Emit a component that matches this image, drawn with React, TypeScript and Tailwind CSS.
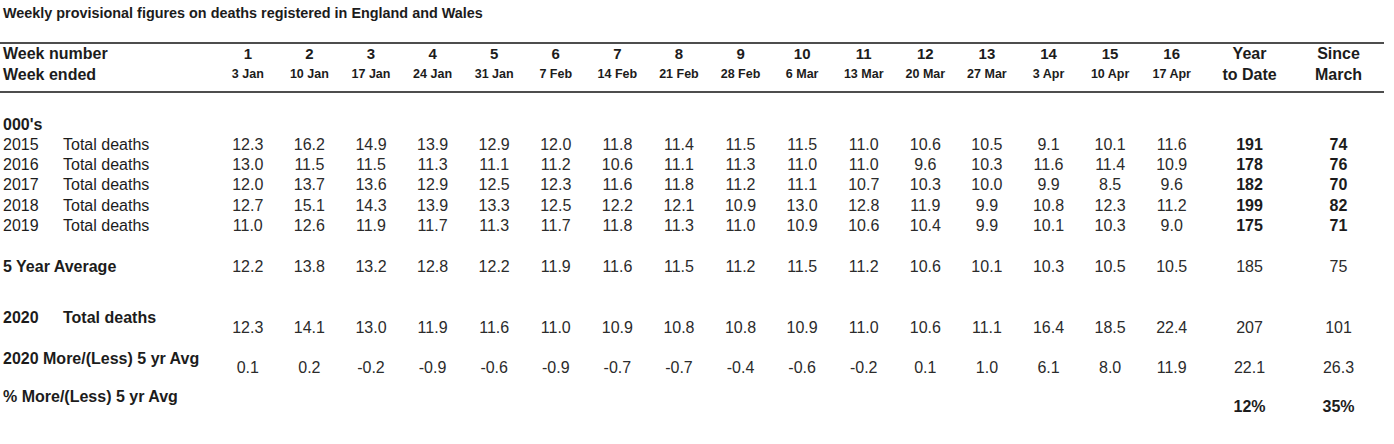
const cols = 'grid grid-cols-[217px_repeat(16,61.6px)_94px_84px]'

const weeks = [
  ['1', '3 Jan'],
  ['2', '10 Jan'],
  ['3', '17 Jan'],
  ['4', '24 Jan'],
  ['5', '31 Jan'],
  ['6', '7 Feb'],
  ['7', '14 Feb'],
  ['8', '21 Feb'],
  ['9', '28 Feb'],
  ['10', '6 Mar'],
  ['11', '13 Mar'],
  ['12', '20 Mar'],
  ['13', '27 Mar'],
  ['14', '3 Apr'],
  ['15', '10 Apr'],
  ['16', '17 Apr'],
]

const years = [
  {
    year: '2015',
    values: ['12.3', '16.2', '14.9', '13.9', '12.9', '12.0', '11.8', '11.4', '11.5', '11.5', '11.0', '10.6', '10.5', '9.1', '10.1', '11.6'],
    ytd: '191',
    since: '74',
  },
  {
    year: '2016',
    values: ['13.0', '11.5', '11.5', '11.3', '11.1', '11.2', '10.6', '11.1', '11.3', '11.0', '11.0', '9.6', '10.3', '11.6', '11.4', '10.9'],
    ytd: '178',
    since: '76',
  },
  {
    year: '2017',
    values: ['12.0', '13.7', '13.6', '12.9', '12.5', '12.3', '11.6', '11.8', '11.2', '11.1', '10.7', '10.3', '10.0', '9.9', '8.5', '9.6'],
    ytd: '182',
    since: '70',
  },
  {
    year: '2018',
    values: ['12.7', '15.1', '14.3', '13.9', '13.3', '12.5', '12.2', '12.1', '10.9', '13.0', '12.8', '11.9', '9.9', '10.8', '12.3', '11.2'],
    ytd: '199',
    since: '82',
  },
  {
    year: '2019',
    values: ['11.0', '12.6', '11.9', '11.7', '11.3', '11.7', '11.8', '11.3', '11.0', '10.9', '10.6', '10.4', '9.9', '10.1', '10.3', '9.0'],
    ytd: '175',
    since: '71',
  },
]

const average = ['12.2', '13.8', '13.2', '12.8', '12.2', '11.9', '11.6', '11.5', '11.2', '11.5', '11.2', '10.6', '10.1', '10.3', '10.5', '10.5']
const current = ['12.3', '14.1', '13.0', '11.9', '11.6', '11.0', '10.9', '10.8', '10.8', '10.9', '11.0', '10.6', '11.1', '16.4', '18.5', '22.4']
const diff = ['0.1', '0.2', '-0.2', '-0.9', '-0.6', '-0.9', '-0.7', '-0.7', '-0.4', '-0.6', '-0.2', '0.1', '1.0', '6.1', '8.0', '11.9']

function Cells({ values, className }: { values: string[]; className: string }) {
  return (
    <>
      {values.map((v, i) => (
        <span key={i} className={`text-center ${className}`}>
          {v}
        </span>
      ))}
    </>
  )
}

export default function App() {
  return (
    <div className="h-[444px] w-[1394px] bg-white font-['Liberation_Sans',Arial,sans-serif] text-[#1c1c1c]">
      <h1 className="pl-[3px] pt-[5px] text-[14.4px] font-bold leading-[16px]">
        Weekly provisional figures on deaths registered in England and Wales
      </h1>

      <div className="mt-[21px] w-[1384px]">
        <div className="h-[2px] bg-[#4d4d4d]" />

        <div className={`${cols} items-center`}>
          <span className="pl-[3px] text-[16px] font-bold leading-[19px]">Week number</span>
          {weeks.map(([n]) => (
            <span key={n} className="text-center text-[15px] font-bold leading-[19px]">
              {n}
            </span>
          ))}
          <span className="text-center text-[16px] font-bold leading-[19px]">Year</span>
          <span className="text-center text-[16px] font-bold leading-[19px]">Since</span>
        </div>
        <div className={`${cols} mb-[6px] items-center`}>
          <span className="pl-[3px] text-[16px] font-bold leading-[21px]">Week ended</span>
          {weeks.map(([n, d]) => (
            <span key={n} className="pt-[1px] text-center text-[12.5px] font-bold leading-[21px]">
              {d}
            </span>
          ))}
          <span className="text-center text-[16px] font-bold leading-[21px]">to Date</span>
          <span className="text-center text-[16px] font-bold leading-[21px]">March</span>
        </div>

        <div className="h-[2px] bg-[#4d4d4d]" />

        <p className="mt-[22px] pl-[3px] text-[16px] font-bold leading-[20px]">000's</p>

        {years.map((row) => (
          <div key={row.year} className={`${cols} text-[16px] leading-[20.2px]`}>
            <span className="flex pl-[3px]">
              <span className="w-[60px]">{row.year}</span>
              <span>Total deaths</span>
            </span>
            <Cells values={row.values} className="text-[#2b2b2b]" />
            <span className="text-center font-bold">{row.ytd}</span>
            <span className="text-center font-bold">{row.since}</span>
          </div>
        ))}

        <div className={`${cols} mt-[21px] text-[16px] leading-[20px]`}>
          <span className="pl-[3px] font-bold">5 Year Average</span>
          <Cells values={average} className="text-[#2b2b2b]" />
          <span className="text-center text-[#2b2b2b]">185</span>
          <span className="text-center text-[#2b2b2b]">75</span>
        </div>

        <div className={`${cols} mt-[31px] text-[16px] leading-[20px]`}>
          <span className="flex pl-[3px] font-bold">
            <span className="w-[60px]">2020</span>
            <span>Total deaths</span>
          </span>
          <Cells values={current} className="pt-[10px] text-[#2b2b2b]" />
          <span className="pt-[10px] text-center text-[#2b2b2b]">207</span>
          <span className="pt-[10px] text-center text-[#2b2b2b]">101</span>
        </div>

        <div className={`${cols} mt-[11px] text-[16px] leading-[20px]`}>
          <span className="whitespace-nowrap pl-[3px] font-bold">2020 More/(Less) 5 yr Avg</span>
          <Cells values={diff} className="pt-[9px] text-[#2b2b2b]" />
          <span className="pt-[9px] text-center text-[#2b2b2b]">22.1</span>
          <span className="pt-[9px] text-center text-[#2b2b2b]">26.3</span>
        </div>

        <div className={`${cols} mt-[9px] text-[16px] leading-[20px]`}>
          <span className="col-span-17 whitespace-nowrap pl-[3px] font-bold">% More/(Less) 5 yr Avg</span>
          <span className="pt-[10px] text-center font-bold">12%</span>
          <span className="pt-[10px] text-center font-bold">35%</span>
        </div>
      </div>
    </div>
  )
}
